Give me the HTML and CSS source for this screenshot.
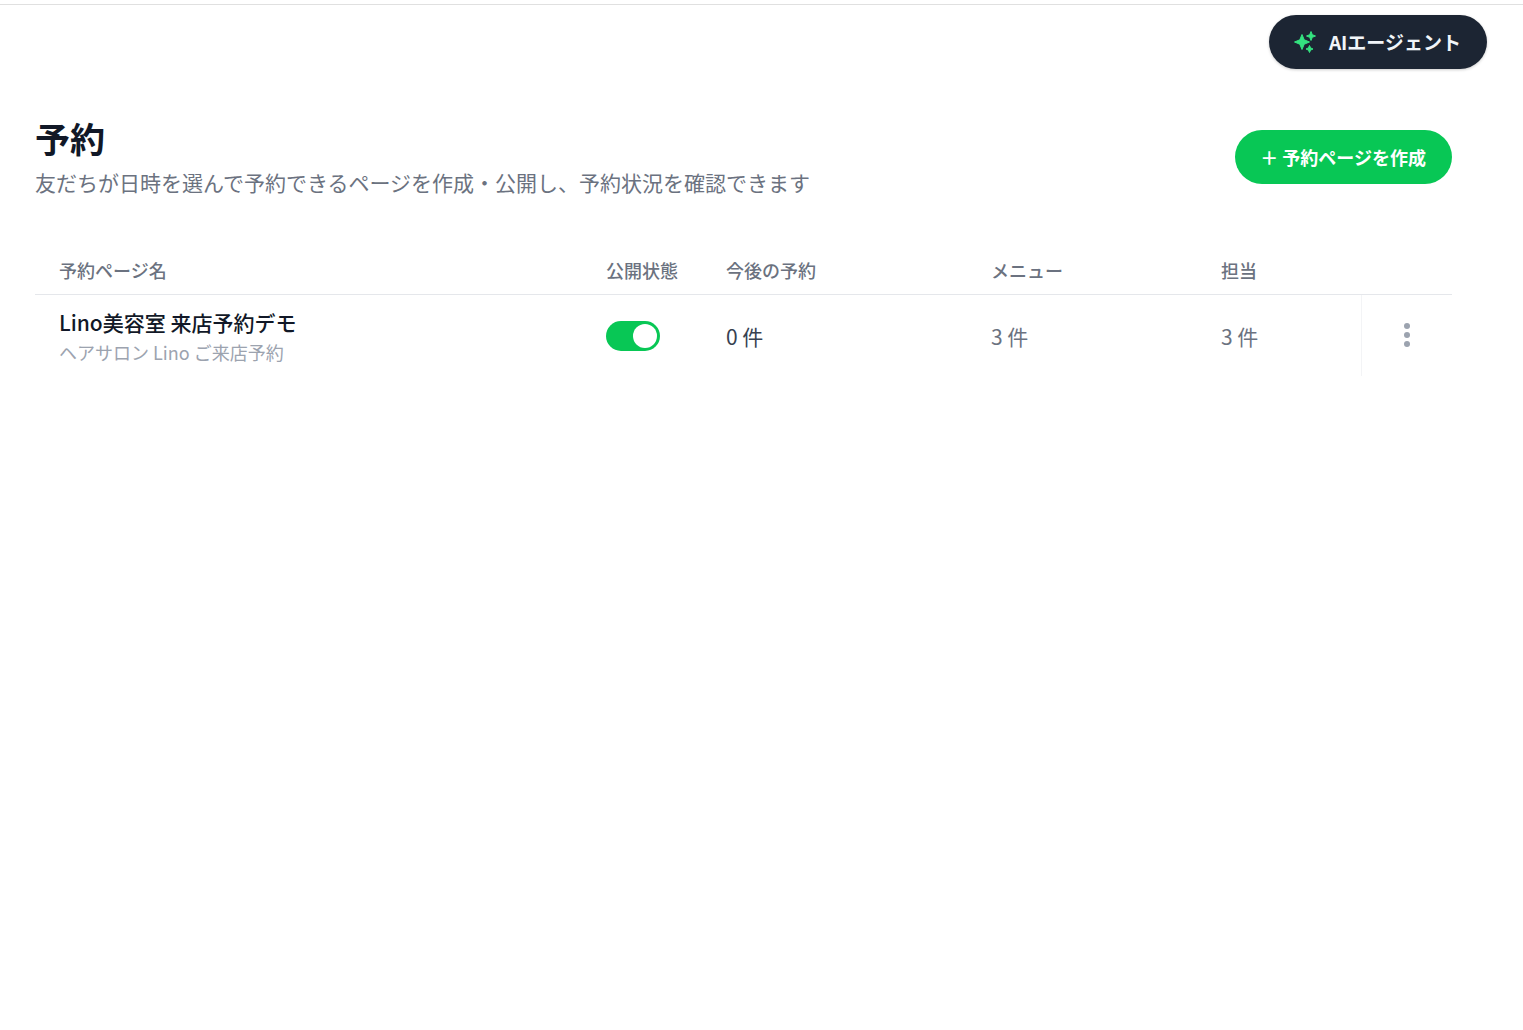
FILE: index.html
```html
<!DOCTYPE html>
<html lang="ja">
<head>
<meta charset="utf-8">
<meta name="viewport" content="width=device-width, initial-scale=1">
<title>予約</title>
<link rel="stylesheet" href="styles.css">
</head>
<body>
<header class="topbar">
  <button type="button" class="agent-button">
    <svg class="agent-icon" viewBox="0 0 24 24" aria-hidden="true">
      <path d="M9 4.500L11.200 9.800L16.500 12L11.200 14.200L9 19.500L6.800 14.200L1.500 12L6.800 9.800Z"/>
      <path d="M18 1.500L19.300 4.700L22.500 6L19.300 7.300L18 10.500L16.700 7.300L13.500 6L16.700 4.700Z"/>
      <path d="M16.500 15.500L17.600 17.900L20 19L17.600 20.100L16.500 22.500L15.400 20.100L13 19L15.400 17.900Z"/>
    </svg>
    <span>AIエージェント</span>
  </button>
</header>
<main class="page">
  <div class="page-head">
    <div>
      <h1 class="title">予約</h1>
      <p class="lead">友だちが日時を選んで予約できるページを作成・公開し、予約状況を確認できます</p>
    </div>
    <button type="button" class="create-button">＋ 予約ページを作成</button>
  </div>
  <table class="list">
    <colgroup>
      <col>
      <col class="col-status">
      <col class="col-upcoming">
      <col class="col-menu">
      <col class="col-staff">
      <col class="col-actions">
    </colgroup>
    <thead>
      <tr>
        <th scope="col">予約ページ名</th>
        <th scope="col">公開状態</th>
        <th scope="col">今後の予約</th>
        <th scope="col">メニュー</th>
        <th scope="col">担当</th>
        <td></td>
      </tr>
    </thead>
    <tbody>
      <tr>
        <td>
          <a href="#" class="name">Lino美容室 来店予約デモ</a>
          <div class="sub">ヘアサロン Lino ご来店予約</div>
        </td>
        <td><input type="checkbox" role="switch" class="switch" aria-label="公開状態" checked></td>
        <td class="upcoming">0 件</td>
        <td>3 件</td>
        <td>3 件</td>
        <td class="actions">
          <button type="button" class="more-button" aria-label="操作メニュー">
            <svg class="more-icon" viewBox="0 0 24 24" aria-hidden="true">
              <circle cx="12" cy="2" r="3"/>
              <circle cx="12" cy="11" r="3"/>
              <circle cx="12" cy="20" r="3"/>
            </svg>
          </button>
        </td>
      </tr>
    </tbody>
  </table>
</main>
</body>
</html>
```
FILE: styles.css
```css
* { box-sizing: border-box; }

body {
  margin: 0;
  padding-top: 4px;
  background: #fff;
  color: #111827;
  font-family: "Noto Sans CJK JP", sans-serif;
}

button {
  border: 0;
  font-family: inherit;
  cursor: pointer;
}

.topbar {
  display: flex;
  justify-content: flex-end;
  padding: 10px 36px 0;
  border-top: 1px solid #e0e0e0;
}

.agent-button {
  display: flex;
  align-items: center;
  gap: 12px;
  height: 54px;
  padding: 0 26px 1px 24px;
  border-radius: 27px;
  background: #1c2533;
  box-shadow: 0 1px 3px rgba(0, 0, 0, 0.2);
  color: #f1f5f9;
  font-size: 19px;
  font-weight: 700;
}

.agent-icon {
  width: 24px;
  height: 24px;
  fill: #34e27f;
  stroke: #34e27f;
  stroke-width: 1;
  stroke-linejoin: round;
}

.page { padding: 46px 71px 36px 35px; }

.page-head {
  display: flex;
  justify-content: space-between;
  align-items: center;
  gap: 24px;
}

.title {
  margin: 0;
  font-size: 35px;
  font-weight: 700;
  line-height: 46px;
}

.lead {
  margin: 5px 0 0;
  color: #6b7280;
  font-size: 21px;
  line-height: 32px;
}

.create-button {
  flex-shrink: 0;
  height: 54px;
  padding: 0 26px 0 25px;
  border-radius: 27px;
  background: #08c755;
  color: #fff;
  font-size: 18px;
  font-weight: 700;
}

.list {
  width: 100%;
  margin-top: 50px;
  border-collapse: separate;
  border-spacing: 0;
  table-layout: fixed;
  text-align: left;
}

.col-status { width: 120px; }
.col-upcoming { width: 265px; }
.col-menu { width: 230px; }
.col-staff { width: 164px; }
.col-actions { width: 91px; }

.list thead th,
.list thead td {
  height: 47px;
  padding: 0 24px 2px;
  border-bottom: 1px solid #e5e7eb;
  color: #6b7280;
  font-size: 18px;
  font-weight: 500;
  line-height: 27px;
}

.list tbody td {
  height: 81px;
  padding: 0 24px;
  color: #6b7280;
  font-size: 21px;
  line-height: 32px;
  vertical-align: middle;
}

.list .upcoming { color: #374151; }

.name {
  color: #111827;
  font-weight: 500;
  text-decoration: none;
}

.sub {
  color: #9ca3af;
  font-size: 18px;
  line-height: 28px;
}

.switch {
  display: flex;
  align-items: center;
  width: 54px;
  height: 30px;
  margin: 0;
  padding: 3px;
  border-radius: 15px;
  background: #d1d5db;
  appearance: none;
  cursor: pointer;
}

.switch::before {
  width: 24px;
  height: 24px;
  border-radius: 50%;
  background: #fff;
  content: "";
}

.switch:checked {
  justify-content: flex-end;
  background: #08c755;
}

.list tbody .actions {
  padding: 0;
  border-left: 1px solid #f3f4f6;
}

.more-button {
  display: flex;
  align-items: center;
  justify-content: center;
  width: 48px;
  height: 48px;
  margin: 0 auto;
  padding: 0;
  background: transparent;
}

.more-icon {
  width: 24px;
  height: 24px;
  overflow: visible;
  fill: #9ca3af;
}
```
